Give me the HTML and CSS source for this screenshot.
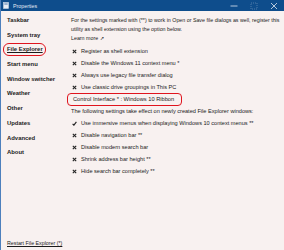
FILE: index.html
```html
<!DOCTYPE html>
<html lang="en">
<head>
    <meta charset="UTF-8">
    <title>Properties</title>
    <link rel="stylesheet" href="styles.css">
</head>
<body>
    <div class="window">
        <div class="titlebar">
            <svg class="app-icon" width="6" height="7" viewBox="0 0 6 7">
                <rect x="0.5" y="0.5" width="5" height="6" fill="#e8eef6" stroke="#c9d6e6" stroke-width="0.6"/>
                <rect x="1.3" y="1.5" width="3.4" height="1" fill="#4a78b0"/>
            </svg>
            <span class="title">Properties</span>
            <div class="controls">
                <svg width="8" height="8" viewBox="0 0 8 8"><line x1="0.5" y1="4" x2="7.5" y2="4" stroke="#dfe8f3" stroke-width="0.8"/></svg>
                <svg width="8" height="8" viewBox="0 0 8 8"><rect x="1" y="1" width="6" height="6" fill="none" stroke="#6b8fb8" stroke-width="0.7" stroke-dasharray="1 1"/></svg>
                <svg width="8" height="8" viewBox="0 0 8 8"><path d="M1 1 L7 7 M7 1 L1 7" stroke="#dfe8f3" stroke-width="0.8"/></svg>
            </div>
        </div>
        <div class="main">
            <div class="sidebar">
                <div class="nav">
                    <div class="nav-item">Taskbar</div>
                    <div class="nav-item">System tray</div>
                    <div class="nav-item active"><span class="ring">File Explorer</span></div>
                    <div class="nav-item">Start menu</div>
                    <div class="nav-item">Window switcher</div>
                    <div class="nav-item">Weather</div>
                    <div class="nav-item">Other</div>
                    <div class="nav-item">Updates</div>
                    <div class="nav-item">Advanced</div>
                    <div class="nav-item">About</div>
                </div>
                <a class="restart" href="#">Restart File Explorer (*)</a>
            </div>
            <div class="content">
                <p class="intro">For the settings marked with (**) to work in Open or Save file dialogs as well, register this utility as shell extension using the option below.<br>Learn more <span class="ext">&#8599;</span></p>
                <div class="opt"><span class="mark x"></span>Register as shell extension</div>
                <div class="opt"><span class="mark x"></span>Disable the Windows 11 context menu *</div>
                <div class="opt"><span class="mark x"></span>Always use legacy file transfer dialog</div>
                <div class="opt"><span class="mark x"></span>Use classic drive groupings in This PC</div>
                <div class="opt select"><span class="ring-wide">Control Interface * : Windows 10 Ribbon</span></div>
                <div class="note">The following settings take effect on newly created File Explorer windows:</div>
                <div class="opt"><span class="mark v"></span>Use immersive menus when displaying Windows 10 context menus **</div>
                <div class="opt"><span class="mark x"></span>Disable navigation bar **</div>
                <div class="opt"><span class="mark x"></span>Disable modern search bar</div>
                <div class="opt"><span class="mark x"></span>Shrink address bar height **</div>
                <div class="opt"><span class="mark x"></span>Hide search bar completely **</div>
            </div>
        </div>
    </div>
</body>
</html>
```

FILE: styles.css
```css
* {
    margin: 0;
    padding: 0;
    box-sizing: border-box;
}
body {
    width: 284px;
    height: 250px;
    overflow: hidden;
    font-family: 'Liberation Sans', Arial, sans-serif;
    color: #1b1b1b;
    background: #f8f1f0;
}
.window {
    height: 250px;
    display: flex;
    flex-direction: column;
    border-left: 1px solid #4d80bd;
    background: #f8f1f0;
}
.titlebar {
    height: 11px;
    background: #0e4d8c;
    display: flex;
    align-items: center;
    padding-left: 2px;
}
.app-icon {
    margin-right: 4px;
}
.title {
    font-size: 5.3px;
    color: #e4ecf5;
}
.controls {
    margin-left: auto;
    display: flex;
    gap: 12px;
    padding-right: 6px;
}
.main {
    flex: 1;
    display: flex;
}
.sidebar {
    width: 70px;
    display: flex;
    flex-direction: column;
    padding: 2px 0 4px 6px;
}
.nav-item {
    height: 14.7px;
    line-height: 14.7px;
    font-size: 5.9px;
    font-weight: bold;
    white-space: nowrap;
}
.ring {
    display: inline-block;
    line-height: 11px;
    padding: 0 2px 0 3px;
    margin-left: -4px;
    border: 1.5px solid #e0141e;
    border-radius: 6px;
    text-decoration: underline;
}
.restart {
    margin-top: auto;
    font-size: 5.3px;
    color: #1b1b1b;
    white-space: nowrap;
}
.content {
    flex: 1;
    padding-top: 4.5px;
    font-size: 5.6px;
}
.intro {
    font-size: 5.3px;
    line-height: 9px;
    margin-bottom: 2.5px;
    padding-right: 2px;
}
.ext {
    font-size: 4.5px;
}
.opt {
    height: 12px;
    display: flex;
    align-items: center;
    white-space: nowrap;
    padding-left: 1px;
}
.mark {
    width: 5px;
    height: 5px;
    margin-right: 4px;
    background-repeat: no-repeat;
}
.mark.x {
    background-image: url("data:image/svg+xml;utf8,<svg xmlns='http://www.w3.org/2000/svg' viewBox='0 0 5 5'><path d='M0.8 0.8 L4.2 4.2 M4.2 0.8 L0.8 4.2' stroke='%23222' stroke-width='1.1'/></svg>");
}
.mark.v {
    background-image: url("data:image/svg+xml;utf8,<svg xmlns='http://www.w3.org/2000/svg' viewBox='0 0 5 5'><path d='M0.6 2.8 L1.9 4.2 L4.4 0.8' fill='none' stroke='%23222' stroke-width='1.1'/></svg>");
}
.select {
    padding-left: 0;
}
.ring-wide {
    display: inline-block;
    margin-left: -4px;
    line-height: 11px;
    padding: 0 7px 0 5px;
    font-size: 5.7px;
    border: 1.5px solid #e0141e;
    border-radius: 4px;
}
.note {
    height: 12px;
    line-height: 12px;
    white-space: nowrap;
}
```
